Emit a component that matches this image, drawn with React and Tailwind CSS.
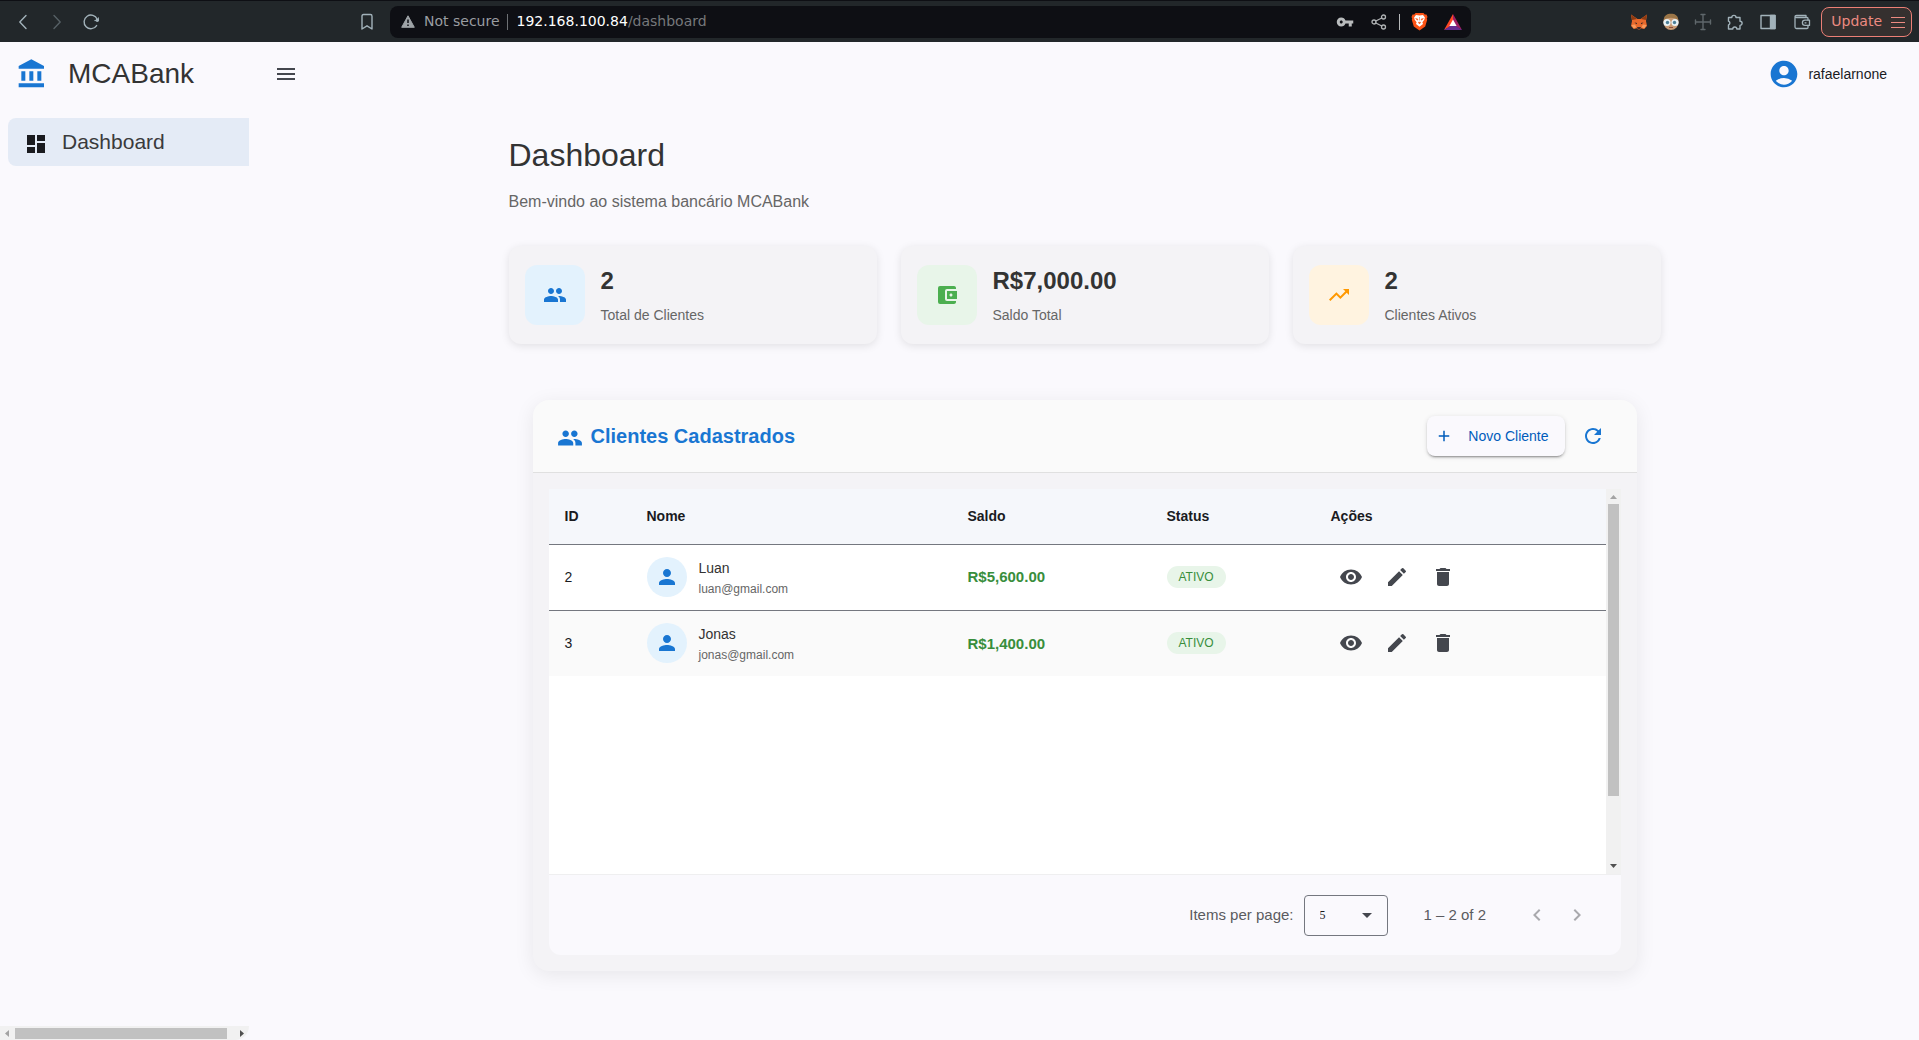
import React from "react";
import {
  MdAccountBalanceWallet,
  MdAccountCircle,
  MdAdd,
  MdArrowDropDown,
  MdChevronLeft,
  MdChevronRight,
  MdDashboard,
  MdDelete,
  MdEdit,
  MdMenu,
  MdPeople,
  MdPerson,
  MdRefresh,
  MdTrendingUp,
  MdVisibility,
  MdVpnKey,
} from "react-icons/md";

const clients = [
  { id: 2, name: "Luan", email: "luan@gmail.com", balance: "R$5,600.00", status: "ATIVO" },
  { id: 3, name: "Jonas", email: "jonas@gmail.com", balance: "R$1,400.00", status: "ATIVO" },
];

const stats = [
  { value: "2", label: "Total de Clientes", Icon: MdPeople, tone: "bg-[#e3f2fd] text-[#1976d2]" },
  { value: "R$7,000.00", label: "Saldo Total", Icon: MdAccountBalanceWallet, tone: "bg-[#e8f5e9] text-[#4caf50]" },
  { value: "2", label: "Clientes Ativos", Icon: MdTrendingUp, tone: "bg-[#fff3e0] text-[#ff9800]" },
];

function Stroke({ children, className = "", size = 18, width = 1.4 }) {
  return (
    <svg
      width={size}
      height={size}
      viewBox="0 0 18 18"
      fill="none"
      stroke="currentColor"
      strokeWidth={width}
      strokeLinecap="round"
      strokeLinejoin="round"
      className={className}
      aria-hidden="true"
    >
      {children}
    </svg>
  );
}

function BrowserBar() {
  return (
    <div className="flex h-[42px] shrink-0 items-center border-t border-[#0e0f14] bg-[#22272a] font-['DejaVu_Sans',sans-serif] text-[#a2b2ba]">
      <div className="flex w-[390px] shrink-0 items-center pr-[14px] pl-[14px]">
        <button aria-label="Back"><Stroke><path d="M12 2.5 5.8 9l6.2 6.5" /></Stroke></button>
        <button aria-label="Forward" className="ml-4 text-[#566065]"><Stroke><path d="M6 2.5 12.2 9 6 15.5" /></Stroke></button>
        <button aria-label="Reload" className="ml-4">
          <Stroke>
            <path d="M14.6 12.6A6.8 6.8 0 1 1 15.2 6.3" />
            <circle cx="15.3" cy="7.2" r="1.7" fill="currentColor" stroke="none" />
            <path d="M12.8 7.6h3.6V4.8" strokeWidth="1" />
          </Stroke>
        </button>
        <button aria-label="Bookmark" className="ml-auto">
          <Stroke><path d="M4 3.2Q4 1.5 5.5 1.5h7Q14 1.5 14 3.2V16l-5-3.2L4 16z" /></Stroke>
        </button>
      </div>
      <div className="flex h-8 w-[1081px] min-w-0 shrink items-center rounded-lg bg-[#0e0f14] pr-[9px] pl-[11px] text-[14px]">
        <svg width="14" height="13" viewBox="0 0 14 13" aria-hidden="true" className="shrink-0">
          <path d="M7 .8 13.3 12.3H.7z" fill="#9ea3a7" stroke="#9ea3a7" strokeLinejoin="round" />
          <path d="M7 4.5v3.5M7 9.5v1.5" stroke="#0e0f14" strokeWidth="1.5" />
        </svg>
        <span className="ml-[9px] whitespace-nowrap text-[#9a9da1]">Not secure</span>
        <span className="ml-[7px] h-4 w-px bg-[#6d7074]" />
        <span className="ml-[9px] whitespace-nowrap text-[#76787b]">
          <span className="text-white">192.168.100.84</span>/dashboard
        </span>
        <div className="ml-auto flex items-center">
          <button aria-label="Passwords" className="text-[#b9bcbd]"><MdVpnKey size={18} /></button>
          <button aria-label="Share" className="ml-4 text-[#b0b3b5]">
            <Stroke width={1.3}>
              <circle cx="4" cy="9" r="2" /><circle cx="13.5" cy="4" r="2" /><circle cx="13.5" cy="14" r="2" />
              <path d="M5.8 8l6-3M5.8 10l6 3" />
            </Stroke>
          </button>
          <span className="ml-[11px] h-4 w-px bg-[#b6b8ba]" />
          <button aria-label="Shields" className="ml-[11px]">
            <svg width="17" height="19" viewBox="0 0 17 19" aria-hidden="true">
              <path d="M4.500 1h8l1.300 1.500 1.700-.1 1 2.600-.7 1.500.4 1.300-2 6.700-5.700 4-5.700-4-2-6.700.4-1.300L.5 5l1-2.600 1.700.1z" fill="#fb5316" />
              <path d="M8.500 3.400 12 3l1.900 2.500-.6 2.300-1.900 2.500.6 1.700-3.500 2.700L5 12l.6-1.700-1.900-2.500-.6-2.300L5 3z" fill="#fff" />
              <path d="m4.600 6.500 2.300.6-.5 1.200zM12.400 6.500l-2.300.6.5 1.200zM7.300 10.200h2.400L8.500 12zM8.500 5v3.500" fill="#fb5316" stroke="#fb5316" strokeWidth=".5" />
            </svg>
          </button>
          <button aria-label="Rewards" className="ml-4">
            <svg width="18" height="16" viewBox="0 0 18 16" aria-hidden="true">
              <path d="M9 0 0 16l9-5z" fill="#ff4724" />
              <path d="M9 0l9 16-9-5z" fill="#9e1f63" />
              <path d="M0 16h18l-9-6z" fill="#662d91" />
              <path d="M9 5.500 12.600 12H5.400z" fill="#fff" />
            </svg>
          </button>
        </div>
      </div>
      <div className="ml-auto flex shrink-0 items-center pr-[7px]">
        <button aria-label="Fox wallet extension">
          <svg width="18" height="18" viewBox="0 0 18 18" aria-hidden="true">
            <path d="M1 1.500 7.500 6h3L17 1.500l-1 6.500 1 5-3 3-3-.8-1 1.300H8l-1-1.300-3 .8-3-3L2 8z" fill="#e8692c" />
            <path d="M1 1.500 7 6 2.200 7zM17 1.500 11 6l4.800 1z" fill="#8d3a12" />
            <path d="m4.500 9.500 2.600.5-.6 1.300zM13.500 9.500l-2.600.5.6 1.300z" fill="#2b2426" />
            <path d="M7 14h4l-.8 2.200H7.800z" fill="#3a2a2c" />
            <path d="m1.500 12 3.500-.6 1.500 2.800-3 1.300zM16.500 12l-3.500-.6-1.500 2.800 3 1.300z" fill="#f79a5c" />
          </svg>
        </button>
        <button aria-label="Face extension" className="ml-[14px]">
          <svg width="18" height="18" viewBox="0 0 18 18" aria-hidden="true">
            <ellipse cx="9" cy="9" rx="7.600" ry="8" fill="#c79a74" />
            <path d="M1.800 7C2 2.500 5 .8 9 .8s7 1.700 7.200 6.200C12 4 6 4 1.800 7z" fill="#9b7547" />
            <circle cx="5" cy="9.500" r="3.600" fill="#e8f1f5" /><circle cx="13" cy="9.500" r="3.600" fill="#e8f1f5" />
            <circle cx="5.500" cy="9.500" r="1.700" fill="#4b7f98" /><circle cx="12.500" cy="9.500" r="1.700" fill="#4b7f98" />
            <path d="M7 14.500h4" stroke="#8b4d3c" />
          </svg>
        </button>
        <button aria-label="Cross extension" className="ml-[14px] text-[#5f676b]">
          <Stroke width={1.4}><path d="M9 2v14M1.500 9h15M7 1.500h4M7 16.500h4M1.500 7v4M16.500 7v4" /></Stroke>
        </button>
        <button aria-label="Extensions" className="ml-[14px]">
          <Stroke width={1.4}>
            <path d="M2.500 4.500h3.300a2.100 2.100 0 1 1 4.200 0h4v3.700a2.100 2.100 0 1 1 0 4.200v3.600h-3.200a2 2 0 0 0-4 0H2.500v-4a2 2 0 0 0 0-3.800z" />
          </Stroke>
        </button>
        <button aria-label="Side panel" className="ml-[15px]">
          <Stroke width={1.4}><path d="M2 2.500h14v13H2z" /><path d="M11.500 2.500h4.500v13h-4.500z" fill="currentColor" /></Stroke>
        </button>
        <button aria-label="Wallet" className="ml-4">
          <Stroke width={1.3}>
            <path d="M2 4.500V14q0 1.500 1.500 1.500h10.500q1 0 1-1V12.500M15 7V5.500q0-1-1-1H3.500Q2 4.500 2 3.500t1.500-1H13v2" />
            <path d="M16.500 7.200H12a2.600 2.600 0 0 0 0 5.200h4.500z" /><path d="M12 9.800h1" />
          </Stroke>
        </button>
        <button className="ml-[10px] flex h-[30px] items-center rounded-lg border border-[#ec7f76] bg-[#35302f] pr-[6px] pl-[9px] text-[14px] text-[#ec8a81]">
          Update
          <svg width="14" height="12" viewBox="0 0 14 12" className="ml-[9px]" aria-hidden="true">
            <path d="M0 1.500h14M0 6.500h14M0 11.500h14" stroke="currentColor" strokeWidth="1" />
          </svg>
        </button>
      </div>
    </div>
  );
}

function BankIcon({ className }) {
  return (
    <svg width="32" height="32" viewBox="0 0 24 24" fill="currentColor" className={className} aria-hidden="true">
      <path d="M4 10v7h3v-7H4zm6 0v7h3v-7h-3zM2 22h19v-3H2v3zm14-12v7h3v-7h-3zm-4.500-9L2 6v2h19V6l-9.500-5z" />
    </svg>
  );
}

function AppHeader() {
  return (
    <header className="flex h-16 shrink-0 items-center pr-8">
      <BankIcon className="ml-4 text-[#1976d2]" />
      <span className="ml-5 w-[196px] text-[28px] leading-8 text-[#333333]">MCABank</span>
      <button aria-label="Menu" className="ml-[10px] text-[#44474e]"><MdMenu size={24} /></button>
      <button className="ml-auto flex items-center gap-2 text-sm">
        <MdAccountCircle size={32} className="text-[#1976d2]" />
        rafaelarnone
      </button>
    </header>
  );
}

function Sidebar() {
  return (
    <aside className="flex w-[250px] shrink-0 flex-col pr-px">
      <nav className="pt-3 pl-2">
        <a href="#dashboard" className="flex h-12 items-center rounded-l-lg bg-[#e4ebf6] pl-4 text-[21px] leading-7 text-[#3a3a3c]">
          <MdDashboard size={24} className="mt-1 mr-[14px] text-[#1a1b1f]" />
          Dashboard
        </a>
      </nav>
      <div className="mt-auto flex h-[14px] items-center rounded-br-2xl bg-[#f1f1f1] pr-[5px] pl-[5px]" aria-hidden="true">
        <svg width="4" height="7" viewBox="0 0 4 7"><path d="M4 0v7L0 3.500z" fill="#a3a3a3" /></svg>
        <div className="mr-[13px] ml-[6px] h-[11px] flex-1 bg-[#c1c1c1]" />
        <svg width="4" height="7" viewBox="0 0 4 7"><path d="M0 0v7l4-3.500z" fill="#505050" /></svg>
      </div>
    </aside>
  );
}

function StatCard({ value, label, Icon, tone }) {
  return (
    <div className="flex flex-1 items-center gap-4 rounded-xl bg-[#f4f3f6] px-4 py-[19px] shadow-[0_2px_8px_rgba(0,0,0,0.1)]">
      <div className={"flex size-[60px] items-center justify-center rounded-xl " + tone}>
        <Icon size={24} />
      </div>
      <div>
        <h3 className="text-2xl leading-8 font-bold text-[#333333]">{value}</h3>
        <p className="mt-2 text-sm text-[#666666]">{label}</p>
      </div>
    </div>
  );
}

function ClientTable() {
  return (
    <div className="flex h-[385px] bg-white">
      <div className="min-w-0 flex-1">
        <table className="w-full table-fixed border-collapse text-left text-sm">
          <colgroup>
            <col className="w-[82px]" />
            <col className="w-[321px]" />
            <col className="w-[199px]" />
            <col className="w-[164px]" />
            <col />
          </colgroup>
          <thead>
            <tr className="h-[55px] border-b border-[#74777f] bg-[#f5f7fb]">
              {["ID", "Nome", "Saldo", "Status", "Ações"].map((h) => (
                <th key={h} scope="col" className="px-4 font-bold">{h}</th>
              ))}
            </tr>
          </thead>
          <tbody>
            {clients.map((c) => (
              <tr key={c.id} className="h-[66px] border-b border-[#74777f] last:border-b-0 even:bg-[#fafafa]">
                <td className="px-4">{c.id}</td>
                <td className="px-4">
                  <div className="flex items-center gap-3">
                    <div className="flex size-10 items-center justify-center rounded-full bg-[#e3f2fd] text-[#1976d2]">
                      <MdPerson size={24} />
                    </div>
                    <div>
                      <div className="text-[#333333]">{c.name}</div>
                      <div className="mt-[3px] text-xs text-[#666666]">{c.email}</div>
                    </div>
                  </div>
                </td>
                <td className="px-4 text-[15px] font-bold text-[#388e3c]">{c.balance}</td>
                <td className="px-4">
                  <span className="inline-flex h-[22px] items-center rounded-full bg-[#e8f5e9] px-3 text-xs text-[#388e3c]">{c.status}</span>
                </td>
                <td className="px-4">
                  <div className="ml-2 flex gap-[22px] text-[#44474e]">
                    <button aria-label={"Ver " + c.name}><MdVisibility size={24} /></button>
                    <button aria-label={"Editar " + c.name}><MdEdit size={24} /></button>
                    <button aria-label={"Excluir " + c.name}><MdDelete size={24} /></button>
                  </div>
                </td>
              </tr>
            ))}
          </tbody>
        </table>
      </div>
      <div className="flex w-[15px] flex-col items-center bg-[#f1f1f1] py-[6px]" aria-hidden="true">
        <svg width="7" height="4" viewBox="0 0 7 4"><path d="M0 4h7L3.500 0z" fill="#a3a3a3" /></svg>
        <div className="mt-[5px] h-[292px] w-[11px] bg-[#c1c1c1]" />
        <svg width="7" height="4" viewBox="0 0 7 4" className="mt-auto"><path d="M0 0h7L3.500 4z" fill="#505050" /></svg>
      </div>
    </div>
  );
}

function Paginator() {
  return (
    <div className="flex h-[81px] items-center justify-end rounded-b-xl border-t border-[#efeff0] bg-[#faf9fd] pr-8 text-[15px] text-[#5a5b60]">
      <label htmlFor="page-size">Items per page:</label>
      <div className="relative ml-[10px]">
        <select
          id="page-size"
          defaultValue="5"
          className="h-[41px] w-[84px] appearance-none rounded border border-[#74777f] pl-[15px] font-['Liberation_Serif',serif] text-xs text-[#1a1b1f]"
        >
          <option>5</option>
          <option>10</option>
          <option>25</option>
        </select>
        <MdArrowDropDown size={24} className="pointer-events-none absolute top-2 right-[9px] text-[#44474e]" />
      </div>
      <span className="ml-9 w-[61px] whitespace-nowrap">1 – 2 of 2</span>
      <button aria-label="Previous page" disabled className="ml-10 text-[#a9a9ad]"><MdChevronLeft size={24} /></button>
      <button aria-label="Next page" disabled className="ml-4 text-[#a9a9ad]"><MdChevronRight size={24} /></button>
    </div>
  );
}

export default function App() {
  return (
    <div className="flex min-h-screen flex-col bg-[#faf9fd] font-['Liberation_Sans',Arial,sans-serif] text-[#1a1b1f]">
      <BrowserBar />
      <AppHeader />
      <div className="flex flex-1">
        <Sidebar />
        <main className="min-w-0 flex-1">
          <div className="mx-auto max-w-[1200px] px-6 pt-[29px] pb-16">
            <h1 className="text-[32px] leading-10 text-[#333333]">Dashboard</h1>
            <p className="mt-[15px] text-base text-[#666666]">Bem-vindo ao sistema bancário MCABank</p>
            <section className="mt-8 flex gap-6">
              {stats.map((s) => (
                <StatCard key={s.label} {...s} />
              ))}
            </section>
            <section className="mx-6 mt-14 rounded-2xl bg-[#f4f3f6] shadow-[0_4px_20px_rgba(0,0,0,0.08)]">
              <div className="flex h-[73px] items-center rounded-t-2xl border-b border-[#e0e0e0] bg-[#fafafa] pr-8 pl-6">
                <MdPeople size={26} className="mt-1 text-[#1976d2]" />
                <h2 className="ml-2 text-xl font-bold text-[#1976d2]">Clientes Cadastrados</h2>
                <button className="ml-auto flex h-10 items-center rounded-lg bg-[#faf9fd] pr-4 pl-2 text-sm text-[#005cbb] shadow-[0_3px_1px_-2px_rgba(0,0,0,0.2),0_2px_2px_rgba(0,0,0,0.14),0_1px_5px_rgba(0,0,0,0.12)]">
                  <MdAdd size={18} className="mr-[15px]" />
                  Novo Cliente
                </button>
                <button aria-label="Atualizar" className="ml-4 text-[#1976d2]"><MdRefresh size={24} /></button>
              </div>
              <div className="p-4">
                <ClientTable />
                <Paginator />
              </div>
            </section>
          </div>
        </main>
      </div>
    </div>
  );
}
